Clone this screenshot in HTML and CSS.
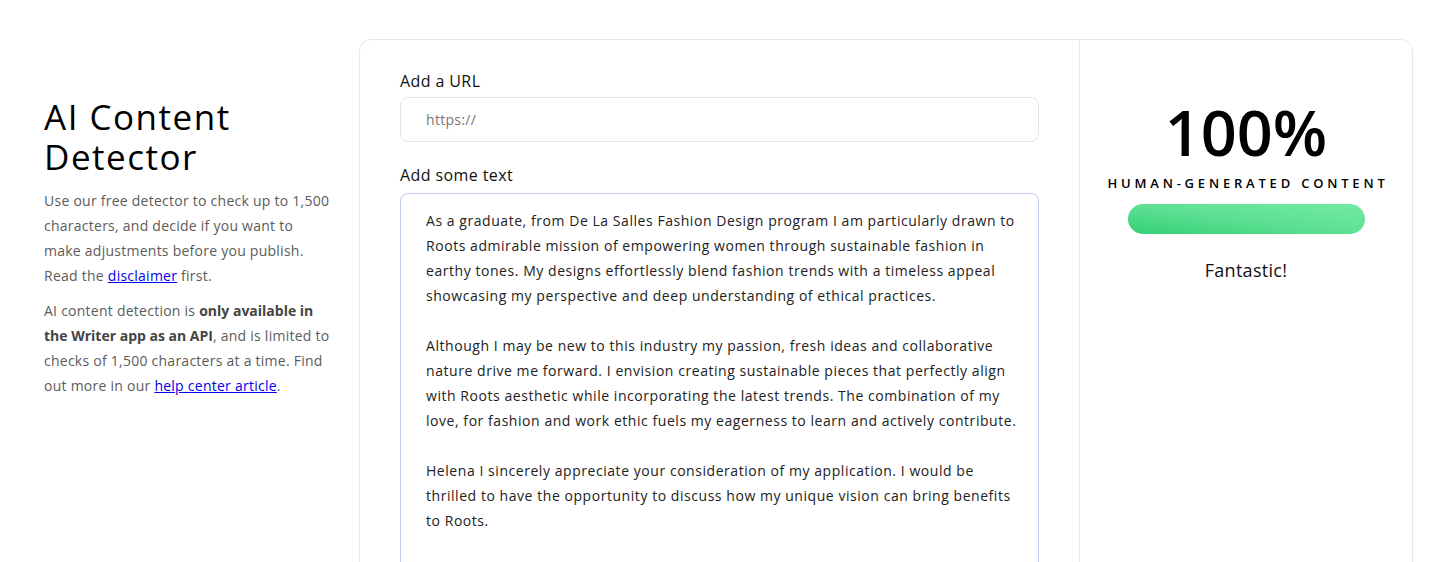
FILE: index.html
```html
<!DOCTYPE html>
<html lang="en">
<head>
<meta charset="utf-8">
<title>AI Content Detector</title>
<link rel="stylesheet" href="styles.css">
</head>
<body>
<main class="page">
  <section class="intro">
    <h1 class="intro-title">AI Content Detector</h1>
    <p class="intro-text">Use our free detector to check up to 1,500 characters, and decide if you want to make adjustments before you publish. Read the <a href="#">disclaimer</a> first.</p>
    <p class="intro-text">AI content detection is <strong>only available in the Writer app as an API</strong>, and is limited to checks of 1,500 characters at a time. Find out more in our <a href="#">help center article</a>.</p>
  </section>
  <section class="card">
    <div class="form">
      <label class="field-label">Add a URL</label>
      <div class="url-input">https://</div>
      <label class="field-label field-label--gap">Add some text</label>
      <div class="text-input">
        <p>As a graduate, from De La Salles Fashion Design program I am particularly drawn to Roots admirable mission of empowering women through sustainable fashion in earthy tones. My designs effortlessly blend fashion trends with a timeless appeal showcasing my perspective and deep understanding of ethical practices.</p>
        <p>Although I may be new to this industry my passion, fresh ideas and collaborative nature drive me forward. I envision creating sustainable pieces that perfectly align with Roots aesthetic while incorporating the latest trends. The combination of my love, for fashion and work ethic fuels my eagerness to learn and actively contribute.</p>
        <p>Helena I sincerely appreciate your consideration of my application. I would be thrilled to have the opportunity to discuss how my unique vision can bring benefits to Roots.</p>
      </div>
    </div>
    <aside class="result">
      <div class="score">100%</div>
      <div class="score-label">HUMAN-GENERATED CONTENT</div>
      <div class="score-bar"></div>
      <div class="score-note">Fantastic!</div>
    </aside>
  </section>
</main>
</body>
</html>
```

FILE: styles.css
```css
* { box-sizing: border-box; }
html, body { margin: 0; padding: 0; background: #fff; }
body {
  font-family: "Open Sans", "Noto Sans", sans-serif;
  color: #111;
  height: 562px;
  overflow: hidden;
}
.page {
  display: flex;
  align-items: flex-start;
  padding-top: 39px;
}
.intro {
  width: 359px;
  padding: 58px 26px 0 44px;
  flex-shrink: 0;
}
.intro-title {
  margin: 0 0 11px;
  font-size: 35px;
  line-height: 40px;
  font-weight: 400;
  letter-spacing: 1.5px;
  color: #000;
}
.intro-text {
  margin: 0 0 10px;
  font-size: 14px;
  line-height: 25px;
  letter-spacing: 0.25px;
  color: #5c5c5c;
}
.intro-text strong { color: #444; font-weight: 700; letter-spacing: 0; }
.intro-text a { color: #0000ee; }

.card {
  width: 1054px;
  height: 600px;
  display: flex;
  border: 1px solid #e6e8f1;
  border-radius: 12px;
}
.form {
  flex: 1;
  padding: 30px 40px 0 40px;
  border-right: 1px solid #e6e8f1;
}
.field-label {
  display: block;
  font-size: 16px;
  line-height: 22px;
  font-weight: 500;
  letter-spacing: 0.4px;
  color: #111;
  margin-bottom: 5px;
}
.field-label--gap { margin-top: 22px; margin-bottom: 7px; }
.url-input {
  height: 45px;
  border: 1px solid #e3e5ee;
  border-radius: 8px;
  padding: 0 25px;
  font-size: 14px;
  line-height: 43px;
  letter-spacing: 0.3px;
  color: #777;
}
.text-input {
  height: 400px;
  border: 1px solid #bfcaf6;
  border-radius: 8px;
  padding: 14px 20px 0 25px;
  font-size: 14px;
  line-height: 25px;
  letter-spacing: 0.55px;
  color: #222;
}
.text-input p { margin: 0 0 25px; }

.result {
  width: 332px;
  flex-shrink: 0;
  display: flex;
  flex-direction: column;
  align-items: center;
  padding-top: 54px;
}
.score {
  font-size: 63px;
  line-height: 76px;
  font-weight: 600;
  color: #000;
}
.score-label {
  margin-top: 4px;
  font-size: 13px;
  line-height: 18px;
  font-weight: 600;
  letter-spacing: 3.8px;
  color: #000;
  padding-left: 4px;
}
.score-bar {
  margin-top: 12px;
  width: 237px;
  height: 30px;
  border-radius: 15px;
  background: linear-gradient(to top right, #34d074 0%, #5ee094 50%, #72eaa3 100%);
}
.score-note {
  margin-top: 24px;
  font-size: 18px;
  line-height: 24px;
  letter-spacing: 0.3px;
  color: #111;
}
```
